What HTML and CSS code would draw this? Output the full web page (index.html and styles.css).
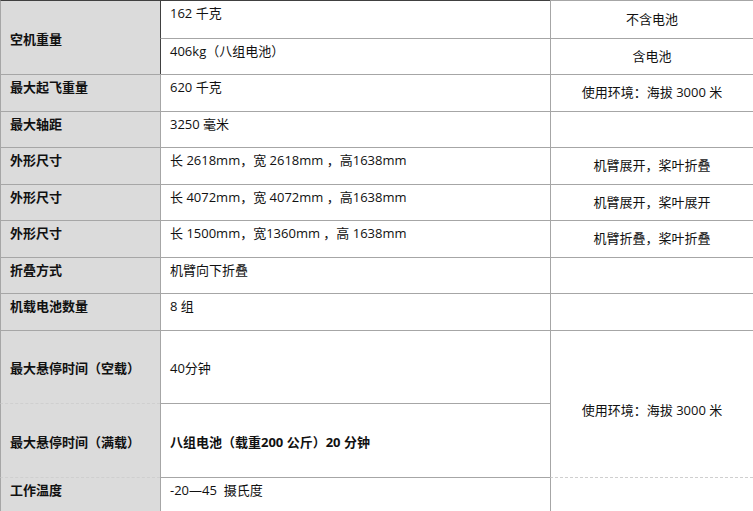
FILE: index.html
```html
<!DOCTYPE html>
<html lang="zh-CN">
<head>
<meta charset="utf-8">
<title>参数表</title>
<link rel="stylesheet" href="styles.css">
</head>
<body>
<div class="spec">
  <div class="c k span2 first">空机重量</div>
  <div class="c v first dark-left">162 千克</div>
  <div class="c n">不含电池</div>
  <div class="c v dark-left">406kg（八组电池）</div>
  <div class="c n">含电池</div>

  <div class="c k">最大起飞重量</div>
  <div class="c v">620 千克</div>
  <div class="c n">使用环境：海拔 3000 米</div>

  <div class="c k">最大轴距</div>
  <div class="c v">3250 毫米</div>
  <div class="c n"></div>

  <div class="c k">外形尺寸</div>
  <div class="c v">长 2618mm，宽 2618mm ，高1638mm</div>
  <div class="c n">机臂展开，桨叶折叠</div>

  <div class="c k">外形尺寸</div>
  <div class="c v">长 4072mm，宽 4072mm ，高1638mm</div>
  <div class="c n">机臂展开，桨叶展开</div>

  <div class="c k">外形尺寸</div>
  <div class="c v">长 1500mm，宽1360mm ，高 1638mm</div>
  <div class="c n">机臂折叠，桨叶折叠</div>

  <div class="c k">折叠方式</div>
  <div class="c v">机臂向下折叠</div>
  <div class="c n"></div>

  <div class="c k">机载电池数量</div>
  <div class="c v">8 组</div>
  <div class="c n"></div>

  <div class="c k mid">最大悬停时间（空载）</div>
  <div class="c v mid">40分钟</div>
  <div class="c n span2 merged">使用环境：海拔 3000 米</div>

  <div class="c k mid dashed">最大悬停时间（满载）</div>
  <div class="c v mid strong">八组电池（载重200 公斤）20 分钟</div>

  <div class="c k dashed">工作温度</div>
  <div class="c v">-20—45&nbsp; 摄氏度</div>
  <div class="c n dashed"></div>
</div>
</body>
</html>
```

FILE: styles.css
```css
html, body {
  margin: 0;
  padding: 0;
  background: #ffffff;
}

body {
  font-family: "Open Sans", "Noto Sans CJK SC", sans-serif;
  font-size: 13px;
  color: #111111;
  width: 753px;
  height: 511px;
  overflow: hidden;
}

.spec {
  display: grid;
  grid-template-columns: 160px 390px 203px;
  grid-template-rows: 38px 36px 37px 36px 37px 36px 37px 36px 37px 73px 74px 40px;
}

.c {
  box-sizing: border-box;
  border-top: 1px solid #a6a6a6;
  border-left: 1px solid #a6a6a6;
  line-height: 20px;
  display: flex;
  white-space: nowrap;
}

.k {
  background: #dbdbdb;
  font-weight: bold;
  padding: 2px 9px 0 9px;
  align-items: flex-start;
}

.v {
  padding: 2px 9px 0 9px;
  align-items: flex-start;
}

.n {
  justify-content: center;
  align-items: center;
  padding-bottom: 2px;
}

.span2 {
  grid-row: span 2;
}

.k.span2 {
  align-items: center;
  padding-top: 2px;
}

.mid {
  align-items: center;
  padding-top: 2px;
}

.merged {
  padding-top: 12px;
  padding-bottom: 0;
}

.first {
  border-top-color: #404040;
}

.dark-left {
  border-left-color: #404040;
}

.dashed {
  border-top: 1px dashed #cfcfcf;
}

.strong {
  font-weight: bold;
}
```
